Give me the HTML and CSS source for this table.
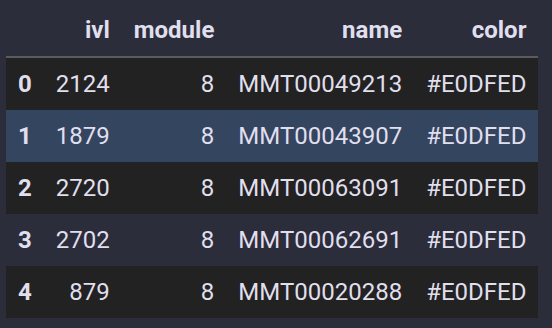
FILE: index.html
```html
<!DOCTYPE html>
<html>
<head>
<meta charset="utf-8">
<link rel="stylesheet" href="styles.css">
</head>
<body>
<div class="wrap">
<table class="df">
<thead>
<tr><th></th><th>ivl</th><th>module</th><th>name</th><th>color</th></tr>
</thead>
<tbody>
<tr class="odd"><th>0</th><td>2124</td><td>8</td><td>MMT00049213</td><td>#E0DFED</td></tr>
<tr class="sel"><th>1</th><td>1879</td><td>8</td><td>MMT00043907</td><td>#E0DFED</td></tr>
<tr class="odd"><th>2</th><td>2720</td><td>8</td><td>MMT00063091</td><td>#E0DFED</td></tr>
<tr><th>3</th><td>2702</td><td>8</td><td>MMT00062691</td><td>#E0DFED</td></tr>
<tr class="odd"><th>4</th><td>879</td><td>8</td><td>MMT00020288</td><td>#E0DFED</td></tr>
</tbody>
</table>
</div>
</body>
</html>
```

FILE: styles.css
```css
html, body {
  margin: 0;
  padding: 0;
  background: #2b2d3b;
}
.wrap {
  padding: 4px 0 0 6px;
}
.df {
  border-collapse: collapse;
  font-family: Roboto, "Liberation Sans", sans-serif;
  font-size: 24px;
  color: #e0dfed;
}
.df th, .df td {
  padding: 12px 12px;
  text-align: right;
  line-height: 28px;
  white-space: nowrap;
}
.df thead th {
  font-weight: bold;
  border-bottom: 2px solid #595b5e;
}
.df tbody th {
  font-weight: bold;
  text-align: left;
}
.df tr.odd {
  background: #222222;
}
.df tr.sel {
  background: #344560;
}
```
